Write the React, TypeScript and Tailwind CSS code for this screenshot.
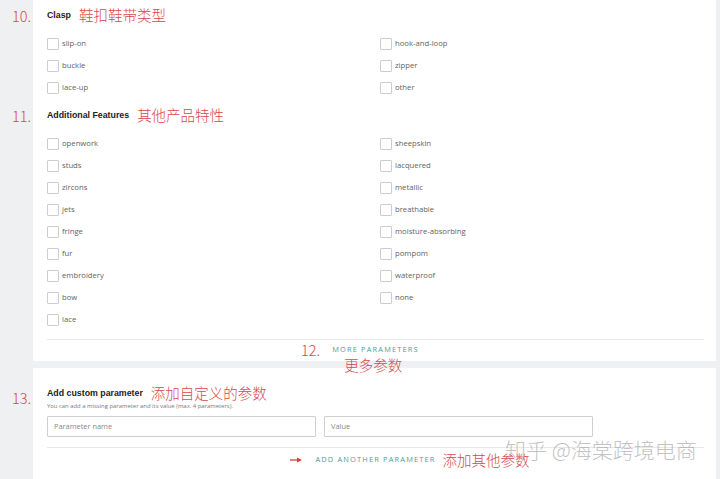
const CLASP = ["slip-on", "hook-and-loop", "buckle", "zipper", "lace-up", "other"];

const FEATURES = [
  "openwork", "sheepskin",
  "studs", "lacquered",
  "zircons", "metallic",
  "jets", "breathable",
  "fringe", "moisture-absorbing",
  "fur", "pompom",
  "embroidery", "waterproof",
  "bow", "none",
  "lace",
];

const note = "font-['Noto_Sans_CJK_SC',sans-serif] font-light text-[#d9474b]";

function Option({ label }: { label: string }) {
  return (
    <label className="flex items-center h-[22px] gap-[3px]">
      <span className="w-[12px] h-[12px] border border-[#cdcdcd] rounded-[1px] bg-white shrink-0" />
      <span className="font-['Open_Sans',sans-serif] text-[7.7px] text-[#636363]">{label}</span>
    </label>
  );
}

function Heading({ num, title, cn, numOffset = 0 }: { num: string; title: string; cn: string; numOffset?: number }) {
  return (
    <div className="relative flex items-center h-full">
      <span
        className={`absolute left-[-35px] text-[14.5px] leading-none ${note}`}
        style={{ top: `calc(50% - 7px + ${numOffset}px)` }}
      >
        {num}
      </span>
      <span className="font-['Liberation_Sans',sans-serif] font-bold text-[8.8px] text-[#222]">{title}</span>
      <span className={`ml-[8px] text-[14.5px] leading-none -mt-[2px] ${note}`}>{cn}</span>
    </div>
  );
}

export default function App() {
  return (
    <div className="relative w-[720px] h-[479px] overflow-hidden bg-[#eef0f2] flex">
      <div className="w-[33px] shrink-0" />
      <div className="w-[683px] flex flex-col gap-[7px]">
        {/* Clasp + features panel */}
        <section className="bg-white pl-[14px] pr-[12px] pt-[5px] h-[361px] shrink-0">
          <div className="h-[22px]">
            <Heading num="10." title="Clasp" cn="鞋扣鞋带类型" />
          </div>
          <div className="grid grid-cols-[333px_1fr] mt-[6px]">
            {CLASP.map((c) => (
              <Option key={c} label={c} />
            ))}
          </div>
          <div className="h-[22px] mt-[6px]">
            <Heading num="11." title="Additional Features" cn="其他产品特性" />
          </div>
          <div className="grid grid-cols-[333px_1fr] mt-[6px]">
            {FEATURES.map((c) => (
              <Option key={c} label={c} />
            ))}
          </div>
          <div className="h-px bg-[#e6e8ea] mt-[8px]" />
          <div className="h-[20px] flex items-center justify-center">
            <span className="relative font-['Open_Sans',sans-serif] text-[7.4px] tracking-[0.16em] text-[#4f9c9c]">
              MORE PARAMETERS
              <span className={`absolute right-full mr-[12px] top-1/2 -translate-y-1/2 text-[14.5px] leading-none tracking-normal ${note}`}>
                12.
              </span>
              <span className={`absolute left-[12px] top-[14px] text-[14.5px] leading-none tracking-normal whitespace-nowrap z-10 ${note}`}>
                更多参数
              </span>
            </span>
          </div>
        </section>

        {/* Custom parameter panel */}
        <section className="bg-white pl-[14px] pr-[12px] pt-[19px] flex-1">
          <div className="h-[14px]">
            <Heading num="13." title="Add custom parameter" cn="添加自定义的参数" numOffset={4} />
          </div>
          <p className="h-[10px] flex items-center font-['Open_Sans',sans-serif] text-[5.9px] text-[#777]">
            You can add a missing parameter and its value (max. 4 parameters).
          </p>
          <div className="flex gap-[8px] mt-[5px]">
            <div className="w-[269px] h-[21px] border border-[#cfcfcf] rounded-[1px] flex items-center px-[6px] font-['Open_Sans',sans-serif] text-[7.4px] text-[#888]">
              Parameter name
            </div>
            <div className="w-[269px] h-[21px] border border-[#cfcfcf] rounded-[1px] flex items-center px-[6px] font-['Open_Sans',sans-serif] text-[7.4px] text-[#888]">
              Value
            </div>
          </div>
          <div className="h-px bg-[#e6e8ea] mt-[10px]" />
          <div className="h-[20px] mt-[2px] flex items-center justify-center">
            <span className="relative font-['Open_Sans',sans-serif] text-[7.4px] tracking-[0.16em] text-[#4f9c9c]">
              ADD ANOTHER PARAMETER
              <svg
                className="absolute right-full mr-[13px] top-1/2 -translate-y-1/2"
                width="12"
                height="6"
                viewBox="0 0 12 6"
              >
                <line x1="0" y1="3" x2="8" y2="3" stroke="#e0393c" strokeWidth="1.3" />
                <path d="M7 0.6 L12 3 L7 5.4 Z" fill="#e0393c" />
              </svg>
              <span className={`absolute left-full ml-[7px] top-1/2 -translate-y-1/2 text-[14.5px] leading-none tracking-normal whitespace-nowrap ${note}`}>
                添加其他参数
              </span>
            </span>
          </div>
        </section>
      </div>
      <div className="absolute left-[505px] top-[439px] font-['Noto_Sans_CJK_SC',sans-serif] font-light text-[21px] leading-none text-[#a8a8a8]/70 whitespace-nowrap">
        知乎 @海棠跨境电商
      </div>
    </div>
  );
}
